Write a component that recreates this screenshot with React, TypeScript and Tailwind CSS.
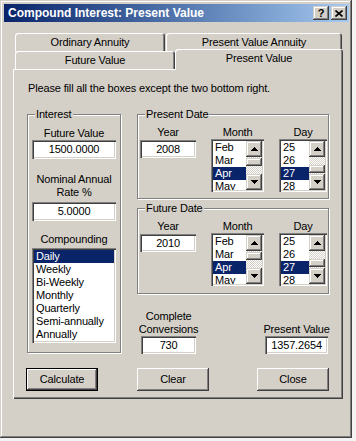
import type { ReactNode } from "react";

const raised =
  "bg-[#d4d0c8] shadow-[inset_-1px_-1px_#404040,inset_1px_1px_#ffffff,inset_-2px_-2px_#808080]";
const raisedSoft =
  "bg-[#d4d0c8] shadow-[inset_-1px_-1px_#404040,inset_1px_1px_#d4d0c8,inset_-2px_-2px_#808080,inset_2px_2px_#ffffff]";
const sunken =
  "bg-white shadow-[inset_1px_1px_#808080,inset_2px_2px_#404040,inset_-1px_-1px_#ffffff,inset_-2px_-2px_#d4d0c8]";

function Arrow({ up }: { up?: boolean }) {
  const rows = up ? [0, 1, 2, 3] : [3, 2, 1, 0];
  return (
    <svg width="7" height="4" viewBox="0 0 7 4" shapeRendering="crispEdges">
      {rows.map((w, y) => (
        <rect key={y} x={3 - w} y={y} width={w * 2 + 1} height={1} fill="#000" />
      ))}
    </svg>
  );
}

function ScrollList({
  items,
  selected,
  className,
  thumbClass,
}: {
  items: string[];
  selected: number;
  className: string;
  thumbClass: string;
}) {
  return (
    <div className={`flex h-[53px] p-[2px] ${sunken} ${className}`}>
      <div className="flex-1 overflow-hidden">
        {items.map((it, i) => (
          <div
            key={it}
            className={`h-[13px] pl-[2px] leading-[13px] ${i === selected ? "bg-[#0a246a] text-white" : ""}`}
          >
            {it}
          </div>
        ))}
      </div>
      <div className="flex w-[16px] flex-col">
        <div className={`flex h-[16px] items-center justify-center ${raisedSoft}`}>
          <Arrow up />
        </div>
        <div className="flex flex-1 flex-col bg-[repeating-conic-gradient(#d4d0c8_0_25%,#ffffff_0_50%)] bg-[length:2px_2px]">
          <div className={`h-[8px] ${raisedSoft} ${thumbClass}`} />
        </div>
        <div className={`flex h-[16px] items-center justify-center ${raisedSoft}`}>
          <Arrow />
        </div>
      </div>
    </div>
  );
}

function GroupBox({ label, className, children }: { label: string; className: string; children: ReactNode }) {
  return (
    <div
      className={`relative border border-[#808080] shadow-[1px_1px_0_#ffffff,inset_1px_1px_0_#ffffff] ${className}`}
    >
      <span className="absolute left-[7px] top-[-7px] bg-[#d4d0c8] px-[1px] leading-[13px]">{label}</span>
      {children}
    </div>
  );
}

function Field({ value, className }: { value: string; className: string }) {
  return <div className={`text-center leading-[18px] ${sunken} ${className}`}>{value}</div>;
}

function DateGroup({ label, year, className, dayThumb }: { label: string; year: string; className: string; dayThumb: string }) {
  return (
    <GroupBox label={label} className={className}>
      <div className="mt-[11px] flex gap-[15px] pl-[2px]">
        <div className="flex w-[56px] flex-col items-center">
          <span className="leading-[13px]">Year</span>
          <Field value={year} className="mt-[1px] h-[18px] w-[56px]" />
        </div>
        <div className="flex w-[53px] flex-col items-center">
          <span className="leading-[13px]">Month</span>
          <ScrollList items={["Feb", "Mar", "Apr", "May"]} selected={2} className="w-[53px]" thumbClass="mt-[1px]" />
        </div>
        <div className="flex w-[48px] flex-col items-center">
          <span className="leading-[13px]">Day</span>
          <ScrollList items={["25", "26", "27", "28"]} selected={2} className="w-[48px]" thumbClass={dayThumb} />
        </div>
      </div>
    </GroupBox>
  );
}

function Tab({ label, className }: { label: string; className: string }) {
  return (
    <div
      className={`flex items-center justify-center rounded-t-[3px] bg-[#d4d0c8] shadow-[inset_1px_1px_#ffffff,inset_-1px_0_#404040,inset_-2px_0_#808080] ${className}`}
    >
      {label}
    </div>
  );
}

function PushButton({ label, isDefault, className }: { label: string; isDefault?: boolean; className: string }) {
  if (isDefault) {
    return (
      <div className={`h-[23px] w-[75px] border border-black ${className}`}>
        <div className={`flex h-full items-center justify-center ${raised}`}>{label}</div>
      </div>
    );
  }
  return <div className={`flex h-[23px] w-[75px] items-center justify-center ${raised} ${className}`}>{label}</div>;
}

export default function App() {
  const compounding = ["Daily", "Weekly", "Bi-Weekly", "Monthly", "Quarterly", "Semi-annually", "Annually"];

  return (
    <div className="h-[441px] w-[356px] bg-[#f3f3f3] font-['Liberation_Sans',Arial,sans-serif] text-[11px] tracking-[-0.15px] text-black">
      <div className={`flex h-[438px] w-[352px] flex-col pl-[4px] pr-[3px] pt-[4px] ${raisedSoft}`}>
        {/* title bar */}
        <div className="flex h-[18px] items-center bg-linear-to-r from-[#0a246a] to-[#a6caf0] pl-[4px] pr-[2px]">
          <span className="text-[12px] font-bold tracking-normal text-white">Compound Interest: Present Value</span>
          <div className="ml-auto flex gap-[2px]">
            <div className={`flex h-[14px] w-[16px] items-center justify-center text-[11px] font-bold leading-none ${raisedSoft}`}>
              ?
            </div>
            <div className={`flex h-[14px] w-[16px] items-center justify-center ${raisedSoft}`}>
              <svg width="8" height="7" viewBox="0 0 8 7">
                <path d="M0.5 0.5 L7.5 6.5 M7.5 0.5 L0.5 6.5" stroke="#000" strokeWidth="1.6" />
              </svg>
            </div>
          </div>
        </div>

        {/* tab control */}
        <div className="ml-[9px] mt-[11px] w-[330px]">
          <div className="flex h-[18px] gap-[1px] pl-[2px]">
            <Tab label="Ordinary Annuity" className="h-[19px] w-[150px]" />
            <Tab label="Present Value Annuity" className="h-[19px] w-[176px]" />
          </div>
          <div className="relative z-10 flex h-[18px] items-start pl-[2px]">
            <Tab label="Future Value" className="h-[18px] w-[160px]" />
            <Tab label="Present Value" className="-mt-[2px] h-[21px] w-[168px] pb-[2px]" />
          </div>

          <div className="flex h-[330px] w-[330px] flex-col px-[14px] shadow-[inset_1px_1px_#ffffff,inset_-1px_-1px_#404040,inset_-2px_-2px_#808080]">
            <p className="mt-[13px] pl-[1px] leading-[13px]">Please fill all the boxes except the two bottom right.</p>

            <div className="mt-[19px] flex h-[240px] items-start gap-[16px]">
              <GroupBox label="Interest" className="h-[239px] w-[97px]">
                <div className="ml-[4px] mt-[12px] flex w-[84px] flex-col items-center">
                  <span className="leading-[13px]">Future Value</span>
                  <Field value="1500.0000" className="h-[19px] w-[84px]" />
                  <span className="mt-[14px] text-center leading-[13px]">
                    Nominal Annual
                    <br />
                    Rate %
                  </span>
                  <Field value="5.0000" className="mt-[3px] h-[19px] w-[84px]" />
                  <span className="mt-[12px] leading-[13px]">Compounding</span>
                  <div className={`mt-[2px] h-[95px] w-[84px] p-[2px] ${sunken}`}>
                    {compounding.map((c, i) => (
                      <div key={c} className={`h-[13px] pl-[2px] leading-[13px] ${i === 0 ? "bg-[#0a246a] text-white" : ""}`}>
                        {c}
                      </div>
                    ))}
                  </div>
                </div>
              </GroupBox>

              <div className="flex w-[198px] flex-col">
                <DateGroup label="Present Date" year="2008" className="h-[85px]" dayThumb="mt-[8px]" />
                <DateGroup label="Future Date" year="2010" className="mt-[9px] h-[86px]" dayThumb="mt-[8px]" />
                <div className="mt-[16px] flex items-end">
                  <div className="ml-[4px] flex w-[55px] flex-col items-center">
                    <span className="whitespace-nowrap text-center leading-[13px]">
                      Complete
                      <br />
                      Conversions
                    </span>
                    <Field value="730" className="h-[18px] w-[55px]" />
                  </div>
                  <div className="ml-[69px] flex w-[63px] flex-col items-center">
                    <span className="whitespace-nowrap leading-[13px]">Present Value</span>
                    <Field value="1357.2654" className="h-[18px] w-[63px]" />
                  </div>
                </div>
              </div>
            </div>

            <div className="-ml-[1px] mt-[14px] flex">
              <PushButton label="Calculate" isDefault className="" />
              <PushButton label="Clear" className="ml-[39px]" />
              <PushButton label="Close" className="ml-[48px]" />
            </div>
          </div>
        </div>
      </div>
    </div>
  );
}
